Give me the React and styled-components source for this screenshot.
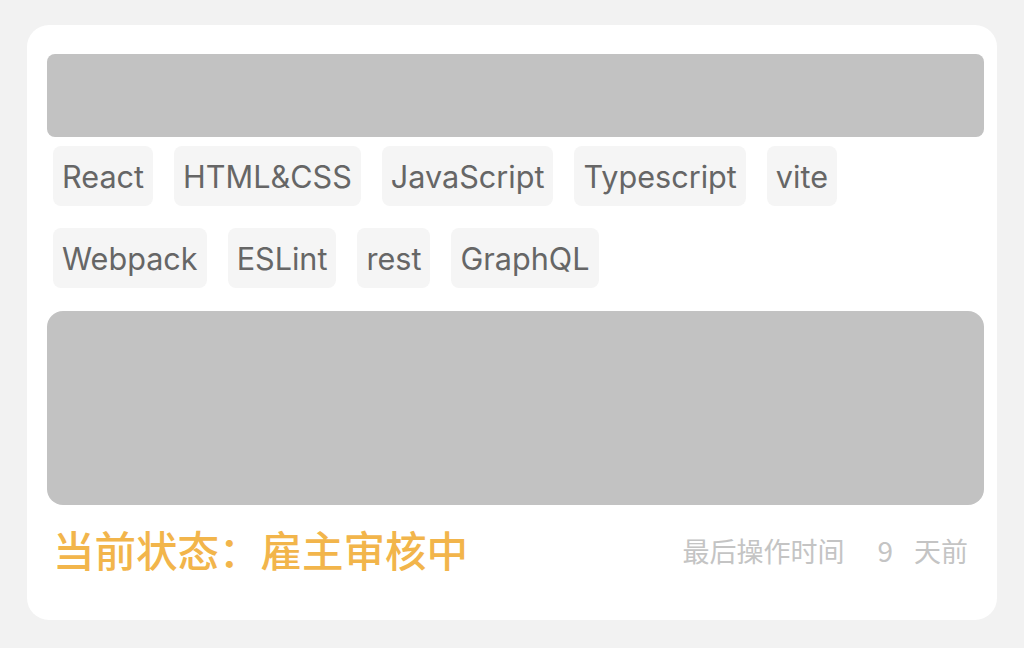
import React from "react";
import styled, { createGlobalStyle } from "styled-components";

const Global = createGlobalStyle`
  html, body {
    margin: 0;
    padding: 0;
    background: #f2f2f2;
  }
  body {
    font-family: "Inter", "Noto Sans CJK SC", sans-serif;
  }
`;

const Page = styled.div`
  padding: 25px 27px 28px 27px;
  width: 1024px;
  height: 648px;
  box-sizing: border-box;
`;

const Card = styled.div`
  background: #ffffff;
  border-radius: 22px;
  height: 595px;
  width: 970px;
  box-sizing: border-box;
  padding: 29px 13px 0 20px;
  display: flex;
  flex-direction: column;
`;

const Placeholder = styled.div`
  background: #c2c2c2;
  height: ${(p) => p.$h}px;
  border-radius: ${(p) => p.$r}px;
  margin-top: ${(p) => p.$mt || 0}px;
`;

const Tags = styled.div`
  display: flex;
  flex-direction: column;
  row-gap: 22px;
  margin-top: 9px;
  padding-left: 6px;
`;

const TagRow = styled.div`
  display: flex;
  column-gap: 21px;
`;

const Tag = styled.span`
  display: inline-flex;
  align-items: center;
  height: 60px;
  padding: 0 9px;
  background: #f5f5f5;
  border-radius: 8px;
  font-size: 30.6px;
  color: #666666;
  font-family: "Inter", sans-serif;
`;

const Footer = styled.div`
  display: flex;
  justify-content: space-between;
  align-items: center;
  margin-top: 25px;
  padding: 0 16px 0 6px;
  height: 40px;
`;

const Status = styled.span`
  font-family: "Noto Sans CJK SC", sans-serif;
  font-size: 41.5px;
  font-weight: 500;
  line-height: 1;
  color: #f2b54b;
`;

const Time = styled.span`
  display: inline-flex;
  align-items: center;
  font-family: "Noto Sans CJK SC", sans-serif;
  font-size: 27px;
  line-height: 1;
  color: #c4c4c4;
`;

const Num = styled.span`
  font-size: 28px;
  margin: 0 21px 0 33px;
`;

const rows = [
  ["React", "HTML&CSS", "JavaScript", "Typescript", "vite"],
  ["Webpack", "ESLint", "rest", "GraphQL"],
];

export default function App() {
  return (
    <>
      <Global />
      <Page>
        <Card>
          <Placeholder $h={83} $r={8} />
          <Tags>
            {rows.map((row, i) => (
              <TagRow key={i}>
                {row.map((t) => (
                  <Tag key={t}>{t}</Tag>
                ))}
              </TagRow>
            ))}
          </Tags>
          <Placeholder $h={194} $r={16} $mt={23} />
          <Footer>
            <Status>当前状态：雇主审核中</Status>
            <Time>
              最后操作时间<Num>9</Num>天前
            </Time>
          </Footer>
        </Card>
      </Page>
    </>
  );
}
